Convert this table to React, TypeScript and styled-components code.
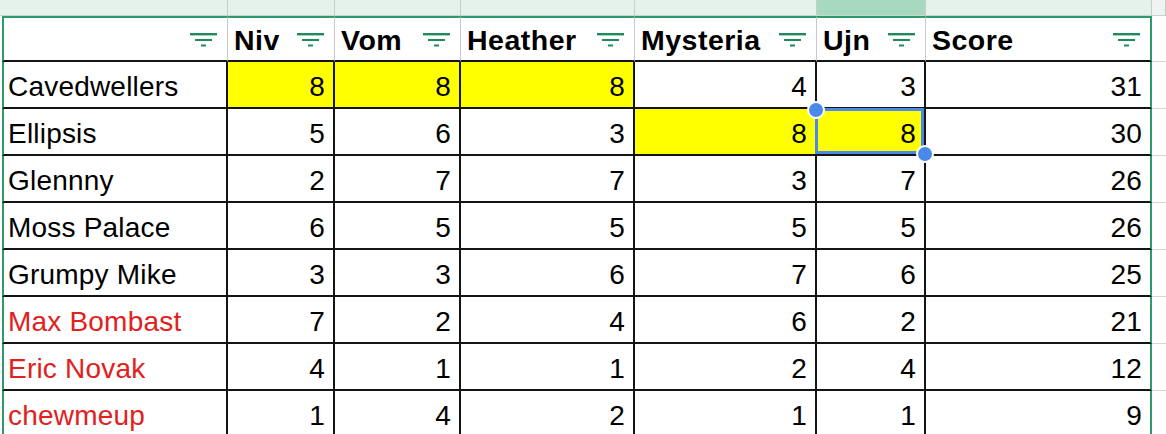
import React from "react";
import styled, { createGlobalStyle, css } from "styled-components";

const GlobalStyle = createGlobalStyle`
  html, body {
    margin: 0;
    padding: 0;
    background: #fff;
    overflow: hidden;
  }
  body {
    font-family: "Liberation Sans", Arial, sans-serif;
  }
`;

const GREEN = "#2f9a6b";
const ICON_GREEN = "#1f8a5c";
const LINE = "#141414";
const BLUE = "#4a88ea";

const Sheet = styled.div`
  width: 1166px;
  height: 434px;
  overflow: hidden;
  background: #fff;
`;

const Band = styled.div`
  display: grid;
  grid-template-columns: 228px 107px 126px 174px 182px 109px 226px 1fr;
  height: 16px;
`;

const BandCell = styled.div<{ $active?: boolean; $outside?: boolean }>`
  box-sizing: border-box;
  background: ${(p) => (p.$active ? "#a7d9c1" : p.$outside ? "#f1f3f2" : "#e4f2eb")};
  border-right: 1px solid #c5cfca;
  border-bottom: 1px solid #c9d6cf;
`;

const Table = styled.div`
  margin-left: 2px;
`;

const Row = styled.div<{ $head?: boolean }>`
  display: grid;
  grid-template-columns: 226px 107px 126px 174px 182px 109px 226px 1fr;
  height: ${(p) => (p.$head ? 46 : 47)}px;
`;

const Cell = styled.div<{
  $head?: boolean;
  $first?: boolean;
  $last?: boolean;
  $num?: boolean;
  $fill?: boolean;
  $red?: boolean;
  $selected?: boolean;
}>`
  box-sizing: border-box;
  position: relative;
  display: flex;
  align-items: flex-end;
  justify-content: ${(p) => (p.$num ? "flex-end" : "flex-start")};
  padding: ${(p) => (p.$num ? "0 8px 4px 0" : "0 0 4px 4px")};
  font-size: 28px;
  letter-spacing: 0.2px;
  white-space: nowrap;
  color: ${(p) => (p.$red ? "#e2201c" : "#000")};
  background: ${(p) => (p.$fill ? "#ffff00" : "#fff")};
  border-bottom: 2px solid ${LINE};
  border-right: ${(p) => (p.$last ? `2px solid ${GREEN}` : `2px solid ${LINE}`)};
  ${(p) => p.$first && css`border-left: 2px solid ${GREEN};`}

  ${(p) =>
    p.$head &&
    css`
      align-items: center;
      justify-content: space-between;
      padding: 1px 10px 0 6px;
      font-size: 28.5px;
      letter-spacing: 0.5px;
      font-weight: bold;
      border-top: 2px solid ${GREEN};
      border-right: ${p.$last ? `2px solid ${GREEN}` : "1px solid #c9c9c9"};
    `}

  ${(p) =>
    p.$selected &&
    css`
      z-index: 2;
      &::after {
        content: "";
        position: absolute;
        left: -2px;
        top: -1px;
        right: 0;
        bottom: 0;
        border: 3px solid ${BLUE};
        pointer-events: none;
      }
    `}
`;

const HeadLabel = styled.span`
  line-height: 32px;
`;

const Outside = styled.div<{ $head?: boolean }>`
  box-sizing: border-box;
  background: #fff;
  border-bottom: 1px solid #d6d6d6;
`;

const Handle = styled.span<{ $corner: "start" | "end" }>`
  position: absolute;
  width: 18px;
  height: 18px;
  box-sizing: border-box;
  border-radius: 50%;
  background: ${BLUE};
  border: 2px solid #fff;
  z-index: 3;
  ${(p) =>
    p.$corner === "start"
      ? css`
          left: -10px;
          top: -8px;
        `
      : css`
          right: -10px;
          bottom: -9px;
        `}
`;

const FilterIcon = () => (
  <svg width="27" height="14" viewBox="0 0 27 14" fill={ICON_GREEN}>
    <rect x="0" y="0" width="27" height="2.4" />
    <rect x="5" y="6" width="17" height="2" />
    <rect x="11" y="11.5" width="5" height="2" />
  </svg>
);

const headers = ["", "Niv", "Vom", "Heather", "Mysteria", "Ujn", "Score"];

type Entry = {
  name: string;
  scores: number[];
  total: number;
  red?: boolean;
  yellow?: number[];
  selected?: number;
};

const rows: Entry[] = [
  { name: "Cavedwellers", scores: [8, 8, 8, 4, 3], total: 31, yellow: [0, 1, 2] },
  { name: "Ellipsis", scores: [5, 6, 3, 8, 8], total: 30, yellow: [3, 4], selected: 4 },
  { name: "Glennny", scores: [2, 7, 7, 3, 7], total: 26 },
  { name: "Moss Palace", scores: [6, 5, 5, 5, 5], total: 26 },
  { name: "Grumpy Mike", scores: [3, 3, 6, 7, 6], total: 25 },
  { name: "Max Bombast", scores: [7, 2, 4, 6, 2], total: 21, red: true },
  { name: "Eric Novak", scores: [4, 1, 1, 2, 4], total: 12, red: true },
  { name: "chewmeup", scores: [1, 4, 2, 1, 1], total: 9, red: true },
];

const App = () => {
  return (
    <Sheet>
      <GlobalStyle />
      <Band>
        {headers.map((h, i) => (
          <BandCell key={i} $active={h === "Ujn"} />
        ))}
        <BandCell $outside />
      </Band>
      <Table>
        <Row $head>
          {headers.map((h, i) => (
            <Cell key={i} $head $first={i === 0} $last={i === headers.length - 1}>
              <HeadLabel>{h}</HeadLabel>
              <FilterIcon />
            </Cell>
          ))}
          <Outside $head />
        </Row>
        {rows.map((r) => (
          <Row key={r.name}>
            <Cell $first $red={r.red}>
              {r.name}
            </Cell>
            {r.scores.map((s, i) => (
              <Cell
                key={i}
                $num
                $fill={r.yellow?.includes(i)}
                $selected={r.selected === i}
              >
                {s}
                {r.selected === i && (
                  <>
                    <Handle $corner="start" />
                    <Handle $corner="end" />
                  </>
                )}
              </Cell>
            ))}
            <Cell $num $last>
              {r.total}
            </Cell>
            <Outside />
          </Row>
        ))}
      </Table>
    </Sheet>
  );
};

export default App;
